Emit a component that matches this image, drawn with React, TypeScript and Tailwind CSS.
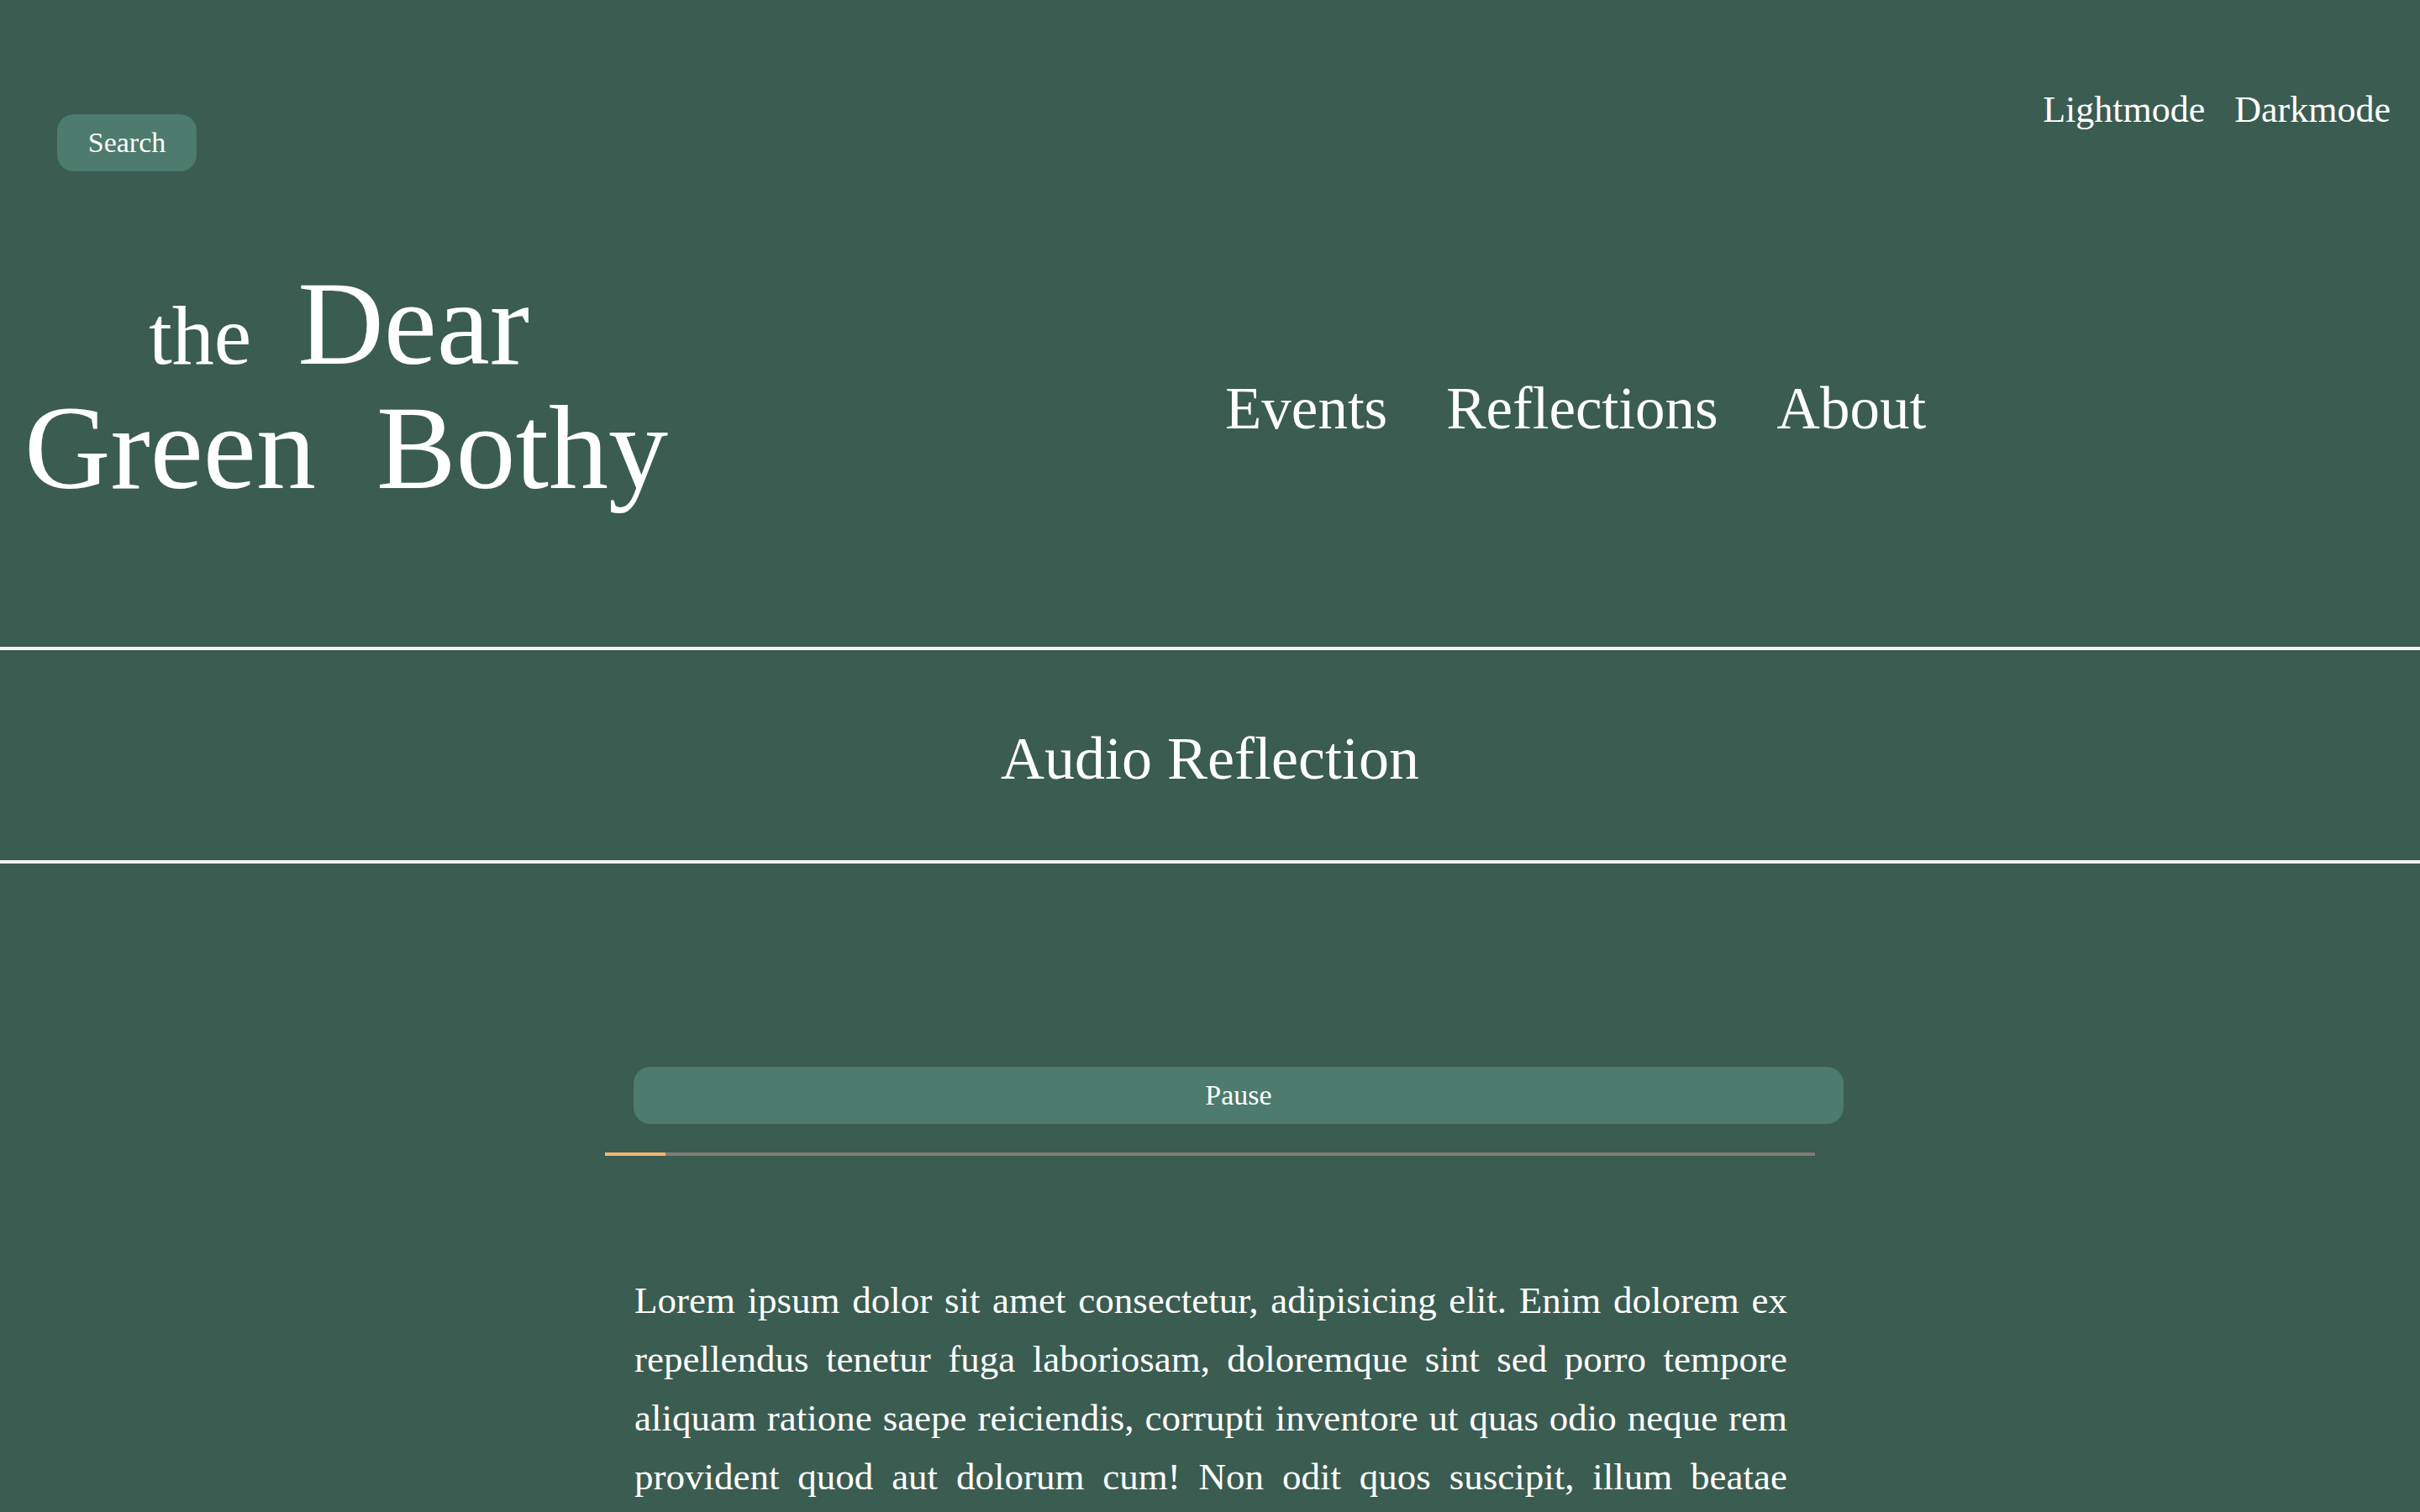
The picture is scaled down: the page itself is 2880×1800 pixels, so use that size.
import React, { useState } from 'react';

// Reflection page: header with logo + nav, title band, audio player and text
const navLinks = ['Events', 'Reflections', 'About'];

const reflectionText =
  'Lorem ipsum dolor sit amet consectetur, adipisicing elit. Enim dolorem ex repellendus tenetur fuga laboriosam, doloremque sint sed porro tempore aliquam ratione saepe reiciendis, corrupti inventore ut quas odio neque rem provident quod aut dolorum cum! Non odit quos suscipit, illum beatae';

function App() {
  const [playing, setPlaying] = useState(true);
  const progress = 5; // percent of the track played

  return (
    <div className="min-h-screen w-full bg-[#3b5c51] text-white font-['Liberation_Serif',serif] overflow-hidden">
      {/* Header */}
      <header>
        <div className="flex items-start justify-between">
          <button className="mt-[136px] ml-[68px] h-[68px] w-[166px] rounded-[20px] bg-[#4d7b6d] text-[34px] leading-[34px] text-white">
            Search
          </button>
          <div className="mt-[109px] mr-[35px] flex gap-[35px] text-[44px] leading-[44px]">
            <button>Lightmode</button>
            <button>Darkmode</button>
          </div>
        </div>

        <div className="mt-[107px] flex items-start">
          {/* Logo */}
          <div className="w-[1458px] shrink-0">
            <div className="flex items-baseline pl-[177px]">
              <span className="text-[100px] leading-[100px]">the</span>
              <span className="ml-[55px] text-[142px] leading-[148px]">Dear</span>
            </div>
            <div className="flex items-baseline pl-[29px]">
              <span className="text-[142px] leading-[148px]">Green</span>
              <span className="ml-[72px] text-[142px] leading-[148px]">Bothy</span>
            </div>
          </div>

          {/* Nav */}
          <nav className="mt-[139px] flex gap-[70px] text-[71px] leading-[72px]">
            {navLinks.map((link) => (
              <a key={link} href="#" className="text-white">
                {link}
              </a>
            ))}
          </nav>
        </div>
      </header>

      <div className="mt-[163px] h-[4px] w-full bg-[#f4f4f2]" />
      <div className="pt-[93px] pb-[85px] text-center text-[72px] leading-[72px]">
        Audio Reflection
      </div>
      <div className="h-[4px] w-full bg-[#f4f4f2]" />

      {/* Player + text */}
      <main className="mx-auto w-[1440px]">
        <button
          className="mt-[242px] ml-[34px] flex h-[68px] w-[1440px] items-center justify-center rounded-[20px] bg-[#4d7b6d] text-[34px] leading-[34px] text-white"
          onClick={() => setPlaying(!playing)}
        >
          {playing ? 'Pause' : 'Play'}
        </button>

        <div className="mt-[34px] h-[4px] w-full bg-[#817c75]">
          <div className="h-full bg-[#f3b66f]" style={{ width: `${progress}%` }} />
        </div>

        <p className="mt-[137px] ml-[35px] w-[1372px] text-justify [text-align-last:justify] text-[45px] leading-[70px]">
          {reflectionText}
        </p>
      </main>
    </div>
  );
}

export default App;
